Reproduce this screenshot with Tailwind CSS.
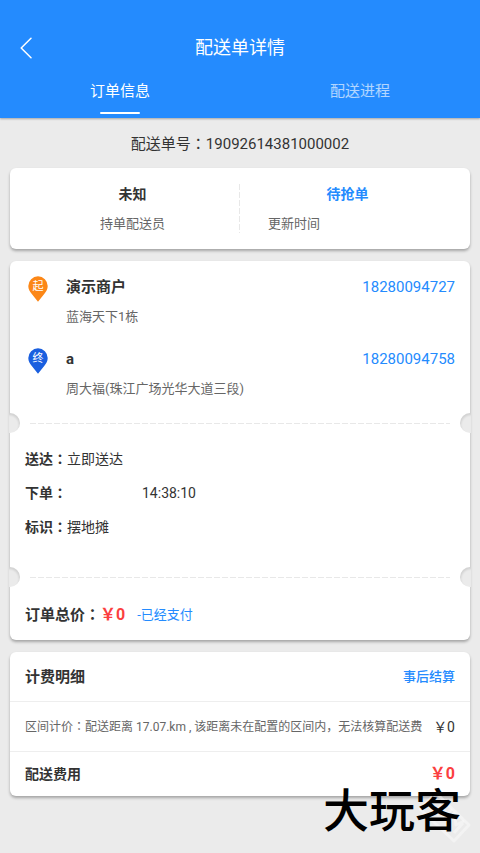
<!DOCTYPE html>
<html lang="zh-CN">
<head>
<meta charset="utf-8">
<meta name="viewport" content="width=device-width, initial-scale=1">
<title>配送单详情</title>
<script src="https://cdn.jsdelivr.net/npm/@tailwindcss/browser@4"></script>
</head>
<body class="bg-[#ebebeb] text-[#333] font-[Roboto,'Noto_Sans_CJK_SC',sans-serif]">
<div class="relative min-h-screen flex flex-col">
  <header class="bg-[#248bfe] pt-6 text-white shadow-[0_1px_2px_rgba(0,0,0,0.3)]">
    <div class="grid grid-cols-[52px_1fr_52px] items-center h-12">
      <button type="button" aria-label="返回" class="flex items-center h-12 pl-5">
        <svg class="w-3 h-[22px]" viewBox="0 0 12 22" fill="none" stroke="currentColor" stroke-width="1.5" stroke-linecap="round" stroke-linejoin="round"><path d="M11 1.200 1.200 11 11 20.800"/></svg>
      </button>
      <h1 class="text-center text-[18px] leading-6">配送单详情</h1>
    </div>
    <nav class="grid grid-cols-2 text-[15px] leading-5">
      <a href="#info" class="flex flex-col items-center pt-[9px] pb-1">订单信息<span class="mt-[11px] h-[2px] w-10 rounded-full bg-white"></span></a>
      <a href="#progress" class="flex flex-col items-center pt-[9px] text-white/65">配送进程</a>
    </nav>
  </header>

  <main id="info" class="flex flex-col gap-3 px-[10px] pt-[14px] pb-14">
    <p class="text-center text-[15px] leading-6">配送单号<span lang="zh-TW" class="leading-none font-['Noto_Sans_CJK_TC']">：</span>19092614381000002</p>

    <section class="grid grid-cols-2 rounded-md bg-white px-[15px] shadow-[0_2px_3px_rgba(0,0,0,0.3)]">
      <div class="relative flex flex-col items-center gap-[10px] pt-4 pb-[15px]">
        <strong class="text-[14px] leading-5 font-bold">未知</strong>
        <span class="text-[13px] leading-5 text-[#666]">持单配送员</span>
        <span class="absolute right-0 inset-y-4 w-px bg-[repeating-linear-gradient(180deg,#e8e8e8_0_6px,transparent_6px_8px)]"></span>
      </div>
      <div class="flex flex-col gap-[10px] pt-4 pb-[15px]">
        <strong class="text-center text-[14px] leading-5 font-bold text-[#248bfe]">待抢单</strong>
        <span class="pl-7 text-[13px] leading-5 text-[#666]">更新时间</span>
      </div>
    </section>

    <section class="rounded-md bg-white shadow-[0_2px_3px_rgba(0,0,0,0.3)]">
      <div class="flex flex-col gap-[22px] px-[15px] pt-4 pb-[14px]">
        <div class="grid grid-cols-[41px_1fr_auto] gap-y-[10px]">
          <svg class="row-span-2 ml-[3px] -mt-px w-5 h-[26px]" viewBox="0 0 20 26" role="img" aria-label="起点"><path fill="#fc8717" d="M10 .3A9.700 9.700 0 0 0 .3 10c0 3.200 1.500 5.600 3.300 7.700L10 25.700l6.400-8C18.200 15.600 19.700 13.200 19.700 10A9.700 9.700 0 0 0 10 .3Z"/><text x="10" y="13.500" text-anchor="middle" font-size="11" fill="#fff">起</text></svg>
          <strong class="text-[15px] leading-5 font-bold">演示商户</strong>
          <a href="tel:18280094727" class="text-[15px] leading-5 text-[#248bfe]">18280094727</a>
          <span class="col-start-2 col-span-2 text-[13px] leading-5 text-[#666]">蓝海天下1栋</span>
        </div>
        <div class="grid grid-cols-[41px_1fr_auto] gap-y-[10px]">
          <svg class="row-span-2 ml-[3px] -mt-px w-5 h-[26px]" viewBox="0 0 20 26" role="img" aria-label="终点"><path fill="#1a5fdf" d="M10 .3A9.700 9.700 0 0 0 .3 10c0 3.200 1.500 5.600 3.300 7.700L10 25.700l6.400-8C18.200 15.600 19.700 13.200 19.700 10A9.700 9.700 0 0 0 10 .3Z"/><text x="10" y="13.500" text-anchor="middle" font-size="11" fill="#fff">终</text></svg>
          <strong class="text-[15px] leading-5 font-bold">a</strong>
          <a href="tel:18280094758" class="text-[15px] leading-5 text-[#248bfe]">18280094758</a>
          <span class="col-start-2 col-span-2 text-[13px] leading-5 text-[#666]">周大福(珠江广场光华大道三段)</span>
        </div>
      </div>

      <div class="flex items-center gap-[10px]">
        <span class="-ml-px h-5 w-[11px] rounded-r-full bg-[#ebebeb] shadow-[inset_-1px_2px_2px_rgba(0,0,0,0.1)]"></span>
        <span class="h-px flex-1 bg-[repeating-linear-gradient(90deg,#e8e8e8_0_6px,transparent_6px_8px)]"></span>
        <span class="-mr-px h-5 w-[11px] rounded-l-full bg-[#ebebeb] shadow-[inset_1px_2px_2px_rgba(0,0,0,0.1)]"></span>
      </div>

      <dl class="flex flex-col gap-[14px] px-[15px] pt-4 pb-[30px] text-[14px] leading-5">
        <div class="flex"><dt class="font-bold">送达<span lang="zh-TW" class="leading-none font-['Noto_Sans_CJK_TC']">：</span></dt><dd>立即送达</dd></div>
        <div class="flex"><dt class="font-bold">下单<span lang="zh-TW" class="leading-none font-['Noto_Sans_CJK_TC']">：</span></dt><dd class="pl-[75px]">14:38:10</dd></div>
        <div class="flex"><dt class="font-bold">标识<span lang="zh-TW" class="leading-none font-['Noto_Sans_CJK_TC']">：</span></dt><dd>摆地摊</dd></div>
      </dl>

      <div class="flex items-center gap-[10px]">
        <span class="-ml-px h-5 w-[11px] rounded-r-full bg-[#ebebeb] shadow-[inset_-1px_2px_2px_rgba(0,0,0,0.1)]"></span>
        <span class="h-px flex-1 bg-[repeating-linear-gradient(90deg,#e8e8e8_0_6px,transparent_6px_8px)]"></span>
        <span class="-mr-px h-5 w-[11px] rounded-l-full bg-[#ebebeb] shadow-[inset_1px_2px_2px_rgba(0,0,0,0.1)]"></span>
      </div>

      <div class="flex items-center px-[15px] pt-[18px] pb-[15px] text-[15px] leading-5">
        <span class="font-bold">订单总价<span lang="zh-TW" class="leading-none font-['Noto_Sans_CJK_TC']">：</span></span>
        <strong class="text-[16px] font-bold text-[#fb3f3f]">￥0</strong>
        <span class="pl-3 text-[13px] text-[#248bfe]">-已经支付</span>
      </div>
    </section>

    <section class="rounded-md bg-white leading-5 shadow-[0_2px_3px_rgba(0,0,0,0.3)]">
      <div class="flex items-center justify-between px-[15px] pt-[15px] pb-[14px] border-b border-[#eee]">
        <h2 class="text-[15px] font-bold">计费明细</h2>
        <span class="text-[13px] font-medium text-[#248bfe]">事后结算</span>
      </div>
      <div class="flex items-center justify-between px-[15px] pt-[15px] pb-[14px] border-b border-[#eee]">
        <span class="text-[12px] text-[#666]">区间计价<span lang="zh-TW" class="leading-none font-['Noto_Sans_CJK_TC']">：</span>配送距离 17.07.km , 该距离未在配置的区间内，无法核算配送费</span>
        <span class="text-[14px]">￥0</span>
      </div>
      <div class="flex items-center justify-between px-[15px] pt-3 pb-3">
        <strong class="text-[14px] font-bold">配送费用</strong>
        <strong class="text-[16px] font-bold text-[#fb3f3f]">￥0</strong>
      </div>
    </section>
  </main>

  <div class="absolute right-2 bottom-2 flex pointer-events-none">
    <svg class="absolute right-0 bottom-0 w-14 h-14" viewBox="0 0 56 56" fill="none" stroke="#fff" stroke-opacity=".4" stroke-width="3" stroke-linejoin="round"><path d="M20 4 4 20 38 52 53 36Z"/><path d="m14 18 8 8 2-9 8 8M26 30l10-10M32 36l6-12 2 12 8-4M38 44l9-10"/></svg>
    <span class="relative pr-[11px] pb-4 text-[46px] leading-[36px] font-medium text-black">大玩客</span>
  </div>
</div>
</body>
</html>
